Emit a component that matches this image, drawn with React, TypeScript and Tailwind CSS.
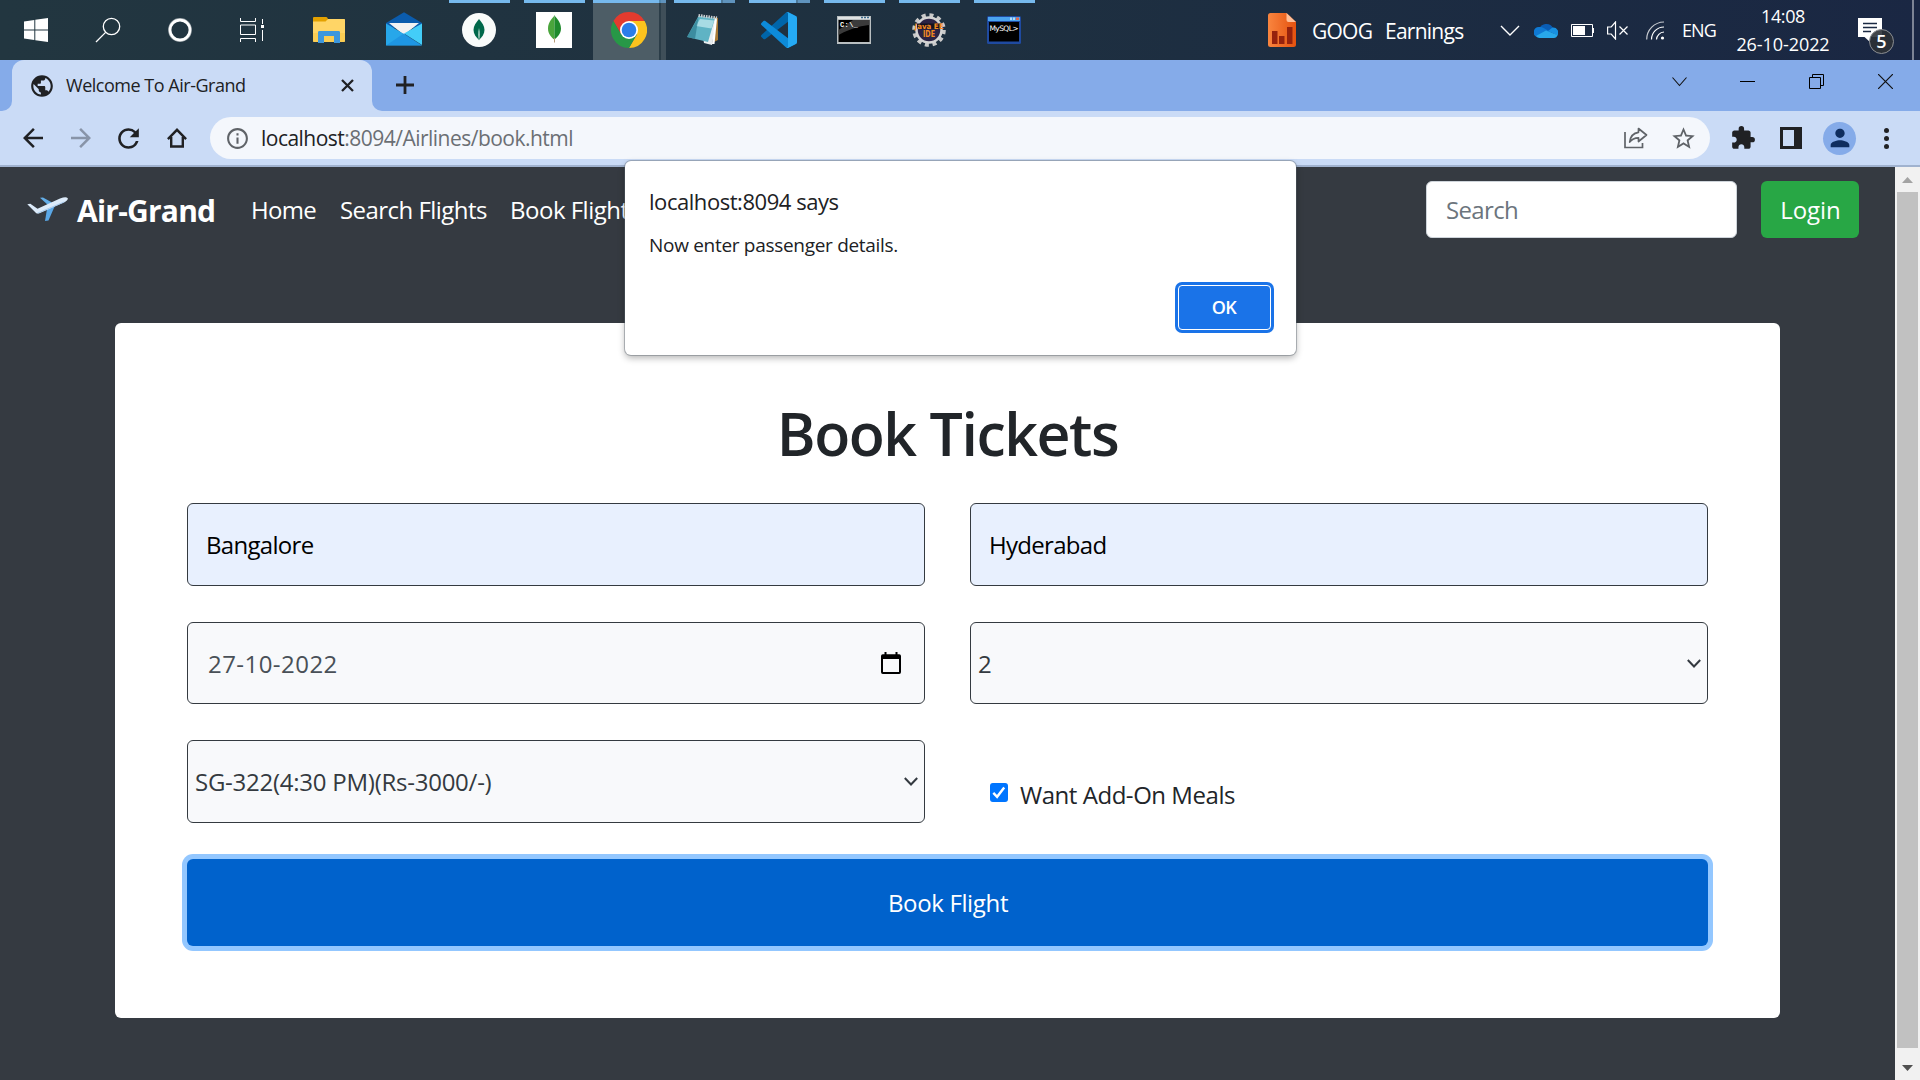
import type { ReactNode } from "react";
import {
  MdArrowBack,
  MdArrowForward,
  MdExtension,
  MdInfoOutline,
  MdPerson,
  MdPublic,
  MdRefresh,
  MdStarBorder,
} from "react-icons/md";

/* ---------- Taskbar icons ---------- */

function WindowsLogo() {
  return (
    <svg width="24" height="24" viewBox="0 0 24 24" fill="#fff">
      <path d="M0 3.4 10.3 2v9.4H0zM11.3 1.8 24 0v11.4H11.3zM0 12.4h10.3v9.5L0 20.5zM11.3 12.4H24V24l-12.7-1.8z" />
    </svg>
  );
}

function SearchGlass() {
  return (
    <svg width="26" height="26" viewBox="0 0 26 26" fill="none" stroke="#fff" strokeWidth="1.3">
      <circle cx="16.5" cy="9.5" r="8.2" />
      <path d="M10.6 15.4 1 25" />
    </svg>
  );
}

function CortanaRing() {
  return (
    <svg width="24" height="24" viewBox="0 0 24 24" fill="none" stroke="#fff">
      <circle cx="12" cy="12" r="10.9" strokeOpacity=".55" strokeWidth="2" />
      <circle cx="12" cy="12" r="9.9" strokeWidth="2.6" />
    </svg>
  );
}

function TaskView() {
  return (
    <svg width="25" height="24" viewBox="0 0 25 24" fill="none" stroke="#fff">
      <path d="M.5 0v3.5h15V0M.5 24v-3.5h15V24M.5 7h15v9.5H.5zM22.5 1v5M22.5 12v11" />
      <path fill="#fff" stroke="none" d="M21 7h3v3h-3z" />
    </svg>
  );
}

function FolderIcon() {
  return (
    <svg width="32" height="28" viewBox="0 0 32 28">
      <path fill="#e3a100" d="M0 1.5Q0 1 1 1h12q1 0 1.6 1L15 4v4H0z" />
      <path fill="#ffd566" d="M0 5.5h12.5L15 3h16.4q.6 0 .6.7V25q0 1-1 1H1q-1 0-1-1z" />
      <path fill="#f9c846" d="M0 17h32v8q0 1-1 1H1q-1 0-1-1z" opacity=".6" />
      <path fill="#3d97dd" d="M5 16.2Q5 15 6.500 15h19q1.500 0 1.500 1.200V27h-6v-7H11v7H5z" />
    </svg>
  );
}

function MailIcon() {
  return (
    <svg width="36" height="34" viewBox="0 0 36 34">
      <path fill="#0b5cad" d="M18 .3 36 11v5H0v-5z" />
      <path fill="#f2f2f2" d="M3 11h30L18 23z" />
      <path fill="#27a7ea" d="M0 11.500 18 22l18 11.500H0z" />
      <path fill="#43cdf8" d="M36 11.500V33L18 21.500z" />
      <path fill="#1789dd" d="m0 33.500 18-12.300 18 12.300z" opacity=".55" />
    </svg>
  );
}

function CompassLeaf() {
  return (
    <svg width="34" height="34" viewBox="0 0 34 34">
      <circle cx="17" cy="17" r="17" fill="#f9fbfa" />
      <path fill="#00684a" d="M17 6c3 3.500 5.500 7 5.500 11S20 24 17 27c-3-3-5.500-6-5.500-10S14 9.500 17 6z" />
      <path fill="#b9d8cc" d="M17 15c1.200 4 .9 9 0 13-.9-4-1.200-9 0-13z" />
    </svg>
  );
}

function MongoLeaf() {
  return (
    <svg width="36" height="36" viewBox="0 0 36 36">
      <path fill="#fff" d="M0 0h36v36H0z" />
      <path fill="#4aa53c" d="M18.500 3c-1 3-6.500 6-6.500 13.500 0 5.500 3.500 9 6.300 11z" />
      <path fill="#1f8a2d" d="M18.500 3c1 3 6.500 6 6.500 13.500 0 5.500-3.900 9-6.700 11z" />
      <path stroke="#b79a78" strokeWidth="1" d="M18.500 26v4.500" />
    </svg>
  );
}

function ChromeLogo() {
  return (
    <svg width="36" height="36" viewBox="-18 -18 36 36">
      <path fill="#e33b2e" d="M-15.590-9A18 18 0 0 1 15.590-9L0-9-7.790 4.500z" />
      <path fill="#fcc31e" d="M15.590-9A18 18 0 0 1 0 18L7.790 4.500 0-9z" />
      <path fill="#279847" d="M0 18A18 18 0 0 1-15.590-9L-7.790 4.500 7.790 4.500z" />
      <circle r="9" fill="#fff" />
      <circle r="7.300" fill="#2b7de9" />
    </svg>
  );
}

function NotepadIcon() {
  return (
    <svg width="34" height="34" viewBox="0 0 34 34">
      <path fill="#a97a35" d="m28 4 4 1v22l-4 2z" />
      <path fill="#e9eef0" d="m13 3 17 3-4 26-8-2z" />
      <path fill="#fff" d="m26 31 2.500 0L31 6l-2-1z" />
      <path fill="#5fb3c4" d="M12.500 3 29 5l-7 24L1 24z" />
      <path fill="#a8dbe4" d="M14 6 28 7.500l-2.500 8L10 13z" />
      <path fill="#2e7d92" d="M12.500 4 9 26 1 24z" opacity=".7" />
      <path stroke="#c9cdd0" strokeWidth="3" strokeDasharray="1.500 1" d="M12.500 2.500 31 5" />
    </svg>
  );
}

function CodeIcon() {
  return (
    <svg width="36" height="36" viewBox="0 0 100 100">
      <path fill="#0065a9" d="M96.500 10.800 75.900.9c-2.400-1.150-5.200-.66-7.100 1.200L1.300 63.600c-1.800 1.650-1.800 4.500 0 6.150l5.500 5c1.500 1.350 3.700 1.450 5.300.23L93.400 13.400c2.700-2 6.600-.1 6.600 3.300v-.24c0-2.400-1.400-4.600-3.500-5.600z" />
      <path fill="#0d8bd9" d="m96.500 89.200-20.600 9.900c-2.400 1.150-5.200.66-7.100-1.200L1.300 36.400c-1.800-1.650-1.800-4.500 0-6.150l5.500-5c1.500-1.350 3.700-1.450 5.300-.23l81.300 61.600c2.700 2 6.600.1 6.600-3.300v.24c0 2.400-1.400 4.600-3.500 5.600z" />
      <path fill="#25aaf4" d="M75.900 99.100c-2.400 1.150-5.200.66-7.100-1.200 2.300 2.300 6.250.68 6.250-2.600V4.700c0-3.260-3.900-4.900-6.250-2.600 1.900-1.900 4.700-2.350 7.100-1.200l20.600 9.900c2.200 1.040 3.500 3.200 3.500 5.600v67.200c0 2.400-1.400 4.600-3.500 5.600z" />
    </svg>
  );
}

function TerminalIcon() {
  return (
    <svg width="34" height="28" viewBox="0 0 34 28">
      <path fill="#b9bfc1" d="M0 0h34v28H0z" />
      <path fill="#dfe3e4" d="M1 1h32v2H1z" />
      <path fill="#3b6a8c" d="M24 .8h2v1.400h-2zM27 .8h2v1.400h-2zM30 .8h2v1.400h-2z" />
      <path fill="#000" d="M1.500 4h31v22h-31z" />
      <path fill="#4a4a4a" d="M16 4h16.500v5C27 9.500 16 11 1.500 19v-5z" opacity=".8" />
      <text x="3" y="10.500" fill="#fff" fontFamily="Liberation Mono, monospace" fontSize="7" fontWeight="700" textLength="18">
        C:\_
      </text>
    </svg>
  );
}

function EclipseIcon() {
  return (
    <svg width="36" height="34" viewBox="-18 -17 36 34">
      <circle r="14.800" fill="none" stroke="#c9c9c9" strokeWidth="4" strokeDasharray="4 3.748" />
      <circle r="12.500" fill="#2a2344" stroke="#d4d4d4" strokeWidth="2.500" />
      <path fill="#15121f" d="M-12-6.500h24v5h-24z" />
      <text x="-14.500" y="-1.500" fill="#f58a1f" fontFamily="DejaVu Sans, sans-serif" fontSize="7.500" fontWeight="700" textLength="29" lengthAdjust="spacingAndGlyphs">
        Java EE
      </text>
      <text y="6.500" fill="#f58a1f" textAnchor="middle" fontFamily="DejaVu Sans, sans-serif" fontSize="8" fontWeight="700" textLength="12" lengthAdjust="spacingAndGlyphs">
        IDE
      </text>
    </svg>
  );
}

function MysqlIcon() {
  return (
    <svg width="34" height="28" viewBox="0 0 34 28">
      <rect width="34" height="28" rx="1.500" fill="#1f4aa0" />
      <path fill="#4aa3ef" d="M1 1h32v4H1z" />
      <path fill="#e06a50" d="M29 1.500h3V4h-3z" />
      <path fill="#b5dcfa" d="M23 1.500h2V4h-2zM26 1.500h2V4h-2z" />
      <path fill="#000" d="M2 6h30v19.500H2z" />
      <text x="2.500" y="14.500" fill="#fff" fontFamily="DejaVu Sans, sans-serif" fontSize="7.500" textLength="29">
        MySQL&gt;
      </text>
    </svg>
  );
}

function EarningsIcon() {
  return (
    <svg width="28" height="34" viewBox="0 0 28 34">
      <defs>
        <linearGradient id="sheet" x1="0" x2="1" y1="0" y2="0">
          <stop offset="0" stopColor="#f9853f" />
          <stop offset="1" stopColor="#e5520f" />
        </linearGradient>
      </defs>
      <path fill="url(#sheet)" d="M2.500 0h16L28 9v22.500q0 2.500-2.500 2.500h-23Q0 34 0 31.500v-29Q0 0 2.500 0z" />
      <path fill="#ffbf98" d="M18.500 0 28 9h-7.500q-2 0-2-2z" />
      <path fill="#96220d" d="M4 18h5.500v13H4zM11 23h5.500v8H11zM19 14h5.500v17H19z" />
    </svg>
  );
}

function Strip({ dim }: { dim?: boolean }) {
  return (
    <div className="absolute top-0 left-[8px] flex h-[3px] w-[61px]">
      <div className="flex-1 bg-[#76b9ed]" />
      {dim && <div className="w-[2px] bg-[#4d7898]" />}
      {dim && <div className="w-[12px] bg-[#5f93bd]" />}
    </div>
  );
}

function AppSlot({ children, open, dim }: { children: ReactNode; open?: boolean; dim?: boolean }) {
  return (
    <div className="relative flex h-full w-[75px] items-center justify-center">
      {open && <Strip dim={dim} />}
      {children}
    </div>
  );
}

function SystemSlot({ children }: { children: ReactNode }) {
  return <div className="flex h-full w-[72px] items-center justify-center">{children}</div>;
}

function Taskbar() {
  return (
    <div className="flex h-[60px] bg-linear-to-r from-[#223640] via-[#1e3040] to-[#1a2743] text-white">
      <SystemSlot><WindowsLogo /></SystemSlot>
      <SystemSlot><SearchGlass /></SystemSlot>
      <SystemSlot><CortanaRing /></SystemSlot>
      <SystemSlot><TaskView /></SystemSlot>
      <div className="ml-[3px] flex">
        <AppSlot><FolderIcon /></AppSlot>
        <AppSlot><div className="-mt-0.5"><MailIcon /></div></AppSlot>
        <AppSlot open><CompassLeaf /></AppSlot>
        <AppSlot open><MongoLeaf /></AppSlot>
        <div className="relative flex h-full w-[75px] justify-center">
          <div className="absolute inset-y-0 left-[2px] flex w-[73px]">
            <div className="w-[66px] border-t-[3px] border-[#76b9ed] bg-[#4d5d66]" />
            <div className="w-[2px] border-t-[3px] border-[#5089b0] bg-[#2b3d48]" />
            <div className="w-[5px] border-t-[3px] border-[#5f93bd] bg-[#3f4f59]" />
          </div>
          <div className="relative self-center"><ChromeLogo /></div>
        </div>
        <AppSlot open dim><div className="-mt-px mr-[2px]"><NotepadIcon /></div></AppSlot>
        <AppSlot open dim><CodeIcon /></AppSlot>
        <AppSlot open><div className="-mt-px"><TerminalIcon /></div></AppSlot>
        <AppSlot open><EclipseIcon /></AppSlot>
        <AppSlot open><div className="-mt-px"><MysqlIcon /></div></AppSlot>
      </div>

      <div className="ml-auto flex items-center">
        <EarningsIcon />
        <span className="ml-[16px] w-[73px] pt-[3px] text-[21px] tracking-[-0.75px]">GOOG</span>
        <span className="w-[115px] pt-[3px] text-[21px] tracking-[-0.75px]">Earnings</span>
        <svg width="20" height="11" viewBox="0 0 20 11" fill="none" stroke="#fff" strokeWidth="1.400" className="mt-px">
          <path d="m1 1 9 9 9-9" />
        </svg>
        <svg width="24" height="16" viewBox="0 0 24 16" className="ml-[14px]">
          <path fill="#0a5db5" d="M5 8a7.500 7.500 0 0 1 14-2l-5 6z" />
          <path fill="#0f79d3" d="M5.500 5a6 6 0 0 1 5 1.500L18 11 3 15A5.200 5.200 0 0 1 5.500 5z" />
          <path fill="#1890e0" d="M18.500 5.500a5.200 5.200 0 0 1 5 8L14 9z" />
          <path fill="#28a8ea" d="m2 14 10-5.500L23.500 13a4 4 0 0 1-4 3H5.500A5 5 0 0 1 2 14z" />
        </svg>
        <svg width="23" height="13" viewBox="0 0 23 13" className="ml-[13px]">
          <path fill="none" stroke="#fff" d="M.5.5h21v12H.5z" />
          <path fill="#fff" d="M2 2h12v9H2zM22 4h1v5h-1z" />
        </svg>
        <svg width="21" height="19" viewBox="0 0 21 19" fill="none" stroke="#fff" strokeWidth="1.200" className="ml-[13px]">
          <path d="M.6 6h3.600L8.500 1v17l-4.300-5H.6zM12.500 5.500l8 8M20.500 5.500l-8 8" />
        </svg>
        <svg width="19" height="19" viewBox="0 0 19 19" fill="none" stroke="#fff" strokeWidth="1.200" className="mt-px ml-[18px]">
          <path strokeOpacity=".75" d="M.7 18.500A17.500 17.500 0 0 1 18 1" />
          <path d="M5.500 18.500A12.500 12.500 0 0 1 18 6M10.500 18.500A8 8 0 0 1 18 11" />
          <circle cx="16.500" cy="17" r="1.600" fill="#fff" stroke="none" />
        </svg>
        <span className="ml-[17px] w-[52px] text-[18px] tracking-[-0.9px]">ENG</span>
        <div className="w-[98px] text-center text-[18px] leading-[28px]">
          <div className="tracking-[-0.4px]">14:08</div>
          <div className="tracking-[-0.07px]">26-10-2022</div>
        </div>
        <div className="relative ml-[26px] h-[24px] w-[24px]">
          <svg width="24" height="24" viewBox="0 0 24 24">
            <path fill="#fff" d="M0 0h24v19H12v5l-5.500-5H0z" />
            <path stroke="#1b2a43" strokeWidth="1.300" d="M5 5.500h14M5 9.500h14M5 13.500h8" />
          </svg>
          <div className="absolute top-[11px] left-[11px] flex size-[25px] items-center justify-center rounded-full border border-[#8c8f93] bg-[#2c3136]/90 text-[18px] font-semibold">
            5
          </div>
        </div>
        <div className="ml-[30px] h-[60px] w-[2px] bg-[#7c8494]" />
        <div className="w-[6px]" />
      </div>
    </div>
  );
}

/* ---------- Browser chrome ---------- */

function TabStrip() {
  return (
    <div className="flex h-[51px] bg-[#85abe9] text-[#202124]">
      <div className="w-[12px] bg-[#cadbf6]">
        <div className="h-full rounded-br-[10px] bg-[#85abe9]" />
      </div>
      <div className="flex w-[360px] items-center rounded-t-[12px] bg-[#cadbf6] pl-[17px]">
        <MdPublic size={26} />
        <span className="ml-[11px] text-[18px] tracking-[-0.48px]">Welcome To Air-Grand</span>
        <svg width="13" height="13" viewBox="0 0 13 13" stroke="#202124" strokeWidth="2.300" className="mr-[18px] ml-auto">
          <path d="m1 1 11 11M12 1 1 12" />
        </svg>
      </div>
      <div className="w-[12px] bg-[#cadbf6]">
        <div className="h-full rounded-bl-[10px] bg-[#85abe9]" />
      </div>
      <svg width="18" height="18" viewBox="0 0 18 18" stroke="#202124" strokeWidth="2.800" className="mt-[16px] ml-[12px]">
        <path d="M9 0v18M0 9h18" />
      </svg>
      <div className="mt-[14px] mr-[27px] ml-auto flex items-start text-black">
        <svg width="16" height="10" viewBox="0 0 16 10" fill="none" stroke="#111" strokeWidth="1.100" className="mt-[3px]">
          <path d="m.5.500 7 8 7-8" />
        </svg>
        <div className="mt-[7px] ml-[52px] h-px w-[15px] bg-black" />
        <svg width="15" height="15" viewBox="0 0 15 15" fill="none" stroke="#000" className="ml-[54px]">
          <path d="M.5 3.500h11v11H.5zM3.500 3.500v-3h11v11h-3" />
        </svg>
        <svg width="15" height="15" viewBox="0 0 15 15" stroke="#111" strokeWidth="1.200" className="ml-[54px]">
          <path d="m0 0 15 15M15 0 0 15" />
        </svg>
      </div>
    </div>
  );
}

function Toolbar() {
  return (
    <div className="flex h-[56px] items-center border-b-2 border-[#a0b2cf] bg-[#cadbf6] text-[#202124]">
      <MdArrowBack size={30} className="ml-[18px]" />
      <MdArrowForward size={30} className="ml-[18px] text-[#8894a8]" />
      <MdRefresh size={31} className="ml-[17px]" />
      <svg width="20" height="20" viewBox="0 0 20 20" fill="none" stroke="#202124" strokeWidth="2.400" strokeLinejoin="miter" className="ml-[23px]">
        <path d="M.9 11.200 10 1.800l9.100 9.400M4.200 9v9.500h11.600V9" />
      </svg>
      <div className="ml-[23px] flex h-[42px] w-[1500px] items-center rounded-full bg-[#f4f7fc] pl-[15px] text-[#5f6368]">
        <MdInfoOutline size={25} />
        <span className="ml-[11px] pt-[2px] text-[21px] tracking-[-0.52px] text-[#6b6f74]">
          <span className="text-[#202124]">localhost</span>:8094/Airlines/book.html
        </span>
        <svg width="24" height="22" viewBox="0 0 24 22" fill="none" stroke="#5f6368" strokeWidth="1.700" className="mr-[22px] ml-auto">
          <path d="M1 5v15.500h17.500V16" />
          <path strokeLinejoin="round" d="M14.500 1.500 22.500 8l-8 6.500v-3.700c-4 0-6.500 1-8.800 4.200.6-5 3.400-9 8.800-9.700z" />
        </svg>
        <MdStarBorder size={27} className="mr-[13px]" />
      </div>
      <MdExtension size={26} className="ml-[20px]" />
      <svg width="22" height="22" viewBox="0 0 22 22" className="ml-[24px]">
        <path fill="#202124" fillRule="evenodd" d="M0 0h22v22H0zM3 3v16h11V3z" />
      </svg>
      <div className="ml-[21px] flex size-[33px] items-center justify-center rounded-full bg-[#85abe9] text-[#0e2d5f]">
        <MdPerson size={28} />
      </div>
      <div className="ml-[28px] flex flex-col gap-[3px]">
        <div className="size-[5px] rounded-full bg-[#202124]" />
        <div className="size-[5px] rounded-full bg-[#202124]" />
        <div className="size-[5px] rounded-full bg-[#202124]" />
      </div>
    </div>
  );
}

/* ---------- Page ---------- */

function PlaneLogo() {
  return (
    <svg width="41" height="25" viewBox="0 0 41 25" fill="none" strokeLinecap="round">
      <path fill="#63aee8" d="M13 .8 16 .5l9 5-4 2.500z" />
      <path fill="#5aa7e6" d="m20 12 8-3.500-6.500 15-3.500.5z" />
      <path fill="#dcebfa" d="m.3 7.300 3-.5 7.200 5L33 1.500q6-2 7.500-.5T37 5.500L13 16q-2.500 1-4 0z" />
      <path stroke="#9cc4ec" strokeWidth=".8" d="M11 16 37 5" />
    </svg>
  );
}

function NavBar() {
  return (
    <div className="flex h-[85px] items-center pl-[27px] text-[24px] text-white">
      <PlaneLogo />
      <span className="ml-[9px] w-[173px] pt-px text-[30px] font-bold tracking-[-0.78px]">Air-Grand</span>
      <span className="ml-px w-[89px] tracking-[-0.7px]">Home</span>
      <span className="w-[170px] tracking-[-0.55px]">Search Flights</span>
      <span className="tracking-[-0.5px]">Book Flights</span>
      <div className="ml-auto flex h-[57px] w-[311px] items-center rounded-[6px] border border-[#ced4da] bg-white pl-[19px] tracking-[-0.66px] text-[#6c757d]">
        Search
      </div>
      <div className="mr-[36px] ml-[24px] flex h-[57px] w-[98px] items-center justify-center rounded-[6px] bg-[#28a745] pl-px tracking-[-0.1px]">
        Login
      </div>
    </div>
  );
}

function Chevron() {
  return (
    <svg width="14" height="9" viewBox="0 0 14 9" fill="none" stroke="#343a40" strokeWidth="2" className="mr-[6px] ml-auto">
      <path d="m.8 1 6.200 6.500L13.200 1" />
    </svg>
  );
}

function Field({ children, filled, select }: { children: ReactNode; filled?: boolean; select?: boolean }) {
  return (
    <div
      className={
        "flex items-center rounded-[6px] border border-[#343a40] " +
        (filled ? "bg-[#e8f0fe] pl-[18px] text-black " : select ? "bg-[#f8f9fb] pl-[7px] text-[#343a40] " : "bg-[#f8f9fb] pl-[20px] text-[#495057] ")
      }
    >
      {children}
      {select && <Chevron />}
    </div>
  );
}

function BookingCard() {
  return (
    <div className="mx-auto mt-[71px] h-[695px] w-[1665px] rounded-[6px] bg-white px-[72px] pt-[68px]">
      <h1 className="h-[112px] text-center text-[59px] leading-[84px] font-semibold tracking-[-1.45px] text-[#212529]">Book Tickets</h1>
      <div className="grid grid-cols-[738px_738px] grid-rows-[83px_82px_83px_87px] gap-x-[45px] gap-y-[36px] text-[24px]">
        <Field filled><span className="tracking-[-0.7px]">Bangalore</span></Field>
        <Field filled><span className="tracking-[-0.7px]">Hyderabad</span></Field>
        <Field>
          <span className="pt-[2px] tracking-[0.45px]">27-10-2022</span>
          <svg width="20" height="22" viewBox="0 0 20 22" className="mr-[23px] ml-auto">
            <path fillRule="evenodd" d="M3.500 0h2v2.200h9V0h2v2.200h1.700Q20 2.200 20 4v16q0 2-1.800 2H1.800Q0 22 0 20V4q0-1.800 1.800-1.800h1.700zM2 7v13h16V7z" />
          </svg>
        </Field>
        <Field select><span className="pt-[2px]">2</span></Field>
        <Field select><span className="tracking-[-0.25px]">SG-322(4:30 PM)(Rs-3000/-)</span></Field>
        <div className="flex items-center pt-[26px] pl-[20px] text-[#212529]">
          <svg width="18" height="19" viewBox="0 0 19 19" preserveAspectRatio="none" className="mb-[5px]">
            <rect width="19" height="19" rx="3" fill="#0075ff" />
            <path fill="none" stroke="#fff" strokeWidth="2.600" d="m3.500 9.800 4 4L15 4.500" />
          </svg>
          <span className="ml-[12px] tracking-[-0.46px]">Want Add-On Meals</span>
        </div>
        <div className="col-span-2 flex items-center justify-center rounded-[6px] bg-[#0062cc] pl-px tracking-[-0.35px] text-white shadow-[0_0_0_5px_#93c7ff]">
          Book Flight
        </div>
      </div>
    </div>
  );
}

function ScrollBar() {
  return (
    <div className="flex w-[25px] flex-col items-center bg-[#f1f1f1]">
      <div className="flex h-[25px] items-center">
        <svg width="11" height="6" viewBox="0 0 11 6" fill="#a3a3a3"><path d="M5.500 0 11 6H0z" /></svg>
      </div>
      <div className="h-[856px] w-[21px] bg-[#c1c1c1]" />
      <div className="flex flex-1 items-center pt-[8px]">
        <svg width="11" height="6" viewBox="0 0 11 6" fill="#505050"><path d="M5.500 6 11 0H0z" /></svg>
      </div>
    </div>
  );
}

function AlertDialog() {
  return (
    <div className="absolute top-[161px] left-[625px] flex h-[194px] w-[671px] flex-col rounded-[6px] bg-white pt-[23px] pr-[22px] pl-[24px] text-[#202124] shadow-[0_0_0_1px_rgba(90,100,110,0.4),0_3px_7px_rgba(0,0,0,0.3)]">
      <div className="text-[22px] leading-[34px] tracking-[-0.45px]">localhost:8094 says</div>
      <div className="mt-[12px] text-[19px] leading-[30px] tracking-[-0.3px]">Now enter passenger details.</div>
      <div className="mt-[22px] ml-auto h-[51px] w-[99px] rounded-[7px] bg-[#1a73e8] p-[3px]">
        <div className="flex h-full items-center justify-center rounded-[4px] border-[1.500px] border-white pr-px text-[18px] font-semibold tracking-[-0.6px] text-white">
          OK
        </div>
      </div>
    </div>
  );
}

export default function App() {
  return (
    <div className="relative flex h-[1080px] w-[1920px] flex-col overflow-hidden whitespace-nowrap font-['Open_Sans',sans-serif]">
      <Taskbar />
      <TabStrip />
      <Toolbar />
      <div className="flex flex-1">
        <div className="w-[1895px] bg-[#353a41]">
          <NavBar />
          <BookingCard />
        </div>
        <ScrollBar />
      </div>
      <AlertDialog />
    </div>
  );
}
